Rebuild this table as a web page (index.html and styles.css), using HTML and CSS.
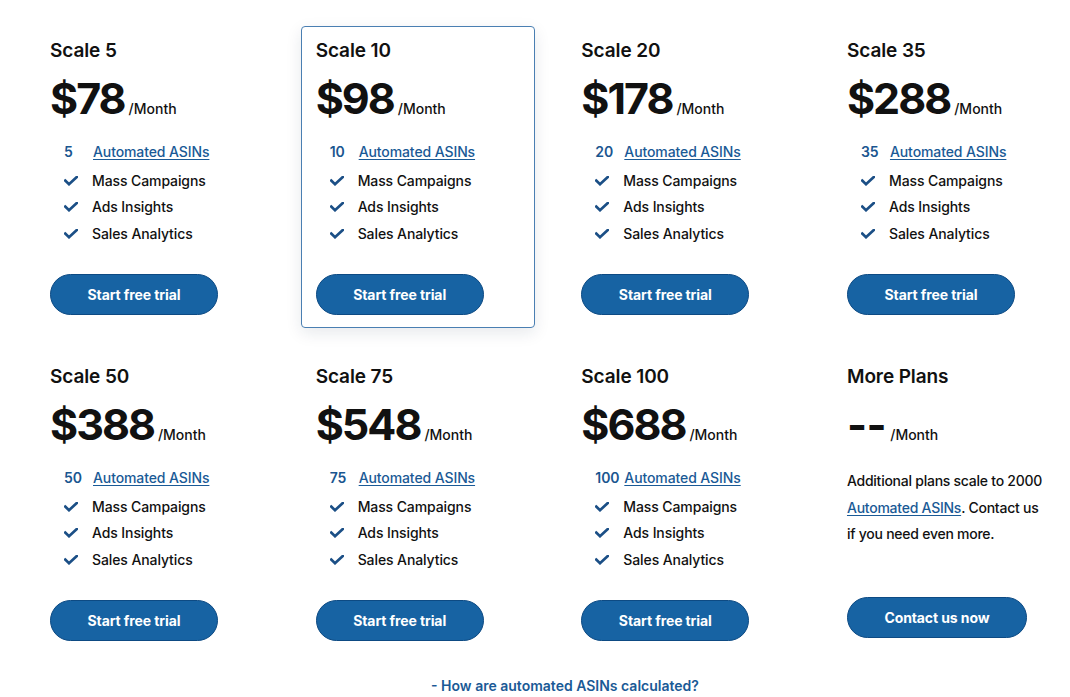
FILE: index.html
```html
<!DOCTYPE html>
<html>
<head>
<meta charset="utf-8">
<link rel="stylesheet" href="styles.css">
</head>
<body>
<main class="pricing">
  <section class="plans">
    <article class="plan">
      <h2 class="plan-name">Scale 5</h2>
      <div class="price"><span class="amount">$78</span><span class="per">/Month</span></div>
      <ul class="features">
        <li class="asins"><span class="num">5</span><a href="#">Automated ASINs</a></li>
        <li><svg class="check" viewBox="0 0 14 10"><path d="M1.2 4.6 5 8.2 12.8 1"/></svg>Mass Campaigns</li>
        <li><svg class="check" viewBox="0 0 14 10"><path d="M1.2 4.6 5 8.2 12.8 1"/></svg>Ads Insights</li>
        <li><svg class="check" viewBox="0 0 14 10"><path d="M1.2 4.6 5 8.2 12.8 1"/></svg>Sales Analytics</li>
      </ul>
      <a class="btn" href="#">Start free trial</a>
    </article>
    <article class="plan featured">
      <h2 class="plan-name">Scale 10</h2>
      <div class="price"><span class="amount">$98</span><span class="per">/Month</span></div>
      <ul class="features">
        <li class="asins"><span class="num">10</span><a href="#">Automated ASINs</a></li>
        <li><svg class="check" viewBox="0 0 14 10"><path d="M1.2 4.6 5 8.2 12.8 1"/></svg>Mass Campaigns</li>
        <li><svg class="check" viewBox="0 0 14 10"><path d="M1.2 4.6 5 8.2 12.8 1"/></svg>Ads Insights</li>
        <li><svg class="check" viewBox="0 0 14 10"><path d="M1.2 4.6 5 8.2 12.8 1"/></svg>Sales Analytics</li>
      </ul>
      <a class="btn" href="#">Start free trial</a>
    </article>
    <article class="plan">
      <h2 class="plan-name">Scale 20</h2>
      <div class="price"><span class="amount">$178</span><span class="per">/Month</span></div>
      <ul class="features">
        <li class="asins"><span class="num">20</span><a href="#">Automated ASINs</a></li>
        <li><svg class="check" viewBox="0 0 14 10"><path d="M1.2 4.6 5 8.2 12.8 1"/></svg>Mass Campaigns</li>
        <li><svg class="check" viewBox="0 0 14 10"><path d="M1.2 4.6 5 8.2 12.8 1"/></svg>Ads Insights</li>
        <li><svg class="check" viewBox="0 0 14 10"><path d="M1.2 4.6 5 8.2 12.8 1"/></svg>Sales Analytics</li>
      </ul>
      <a class="btn" href="#">Start free trial</a>
    </article>
    <article class="plan">
      <h2 class="plan-name">Scale 35</h2>
      <div class="price"><span class="amount">$288</span><span class="per">/Month</span></div>
      <ul class="features">
        <li class="asins"><span class="num">35</span><a href="#">Automated ASINs</a></li>
        <li><svg class="check" viewBox="0 0 14 10"><path d="M1.2 4.6 5 8.2 12.8 1"/></svg>Mass Campaigns</li>
        <li><svg class="check" viewBox="0 0 14 10"><path d="M1.2 4.6 5 8.2 12.8 1"/></svg>Ads Insights</li>
        <li><svg class="check" viewBox="0 0 14 10"><path d="M1.2 4.6 5 8.2 12.8 1"/></svg>Sales Analytics</li>
      </ul>
      <a class="btn" href="#">Start free trial</a>
    </article>
    <article class="plan">
      <h2 class="plan-name">Scale 50</h2>
      <div class="price"><span class="amount">$388</span><span class="per">/Month</span></div>
      <ul class="features">
        <li class="asins"><span class="num">50</span><a href="#">Automated ASINs</a></li>
        <li><svg class="check" viewBox="0 0 14 10"><path d="M1.2 4.6 5 8.2 12.8 1"/></svg>Mass Campaigns</li>
        <li><svg class="check" viewBox="0 0 14 10"><path d="M1.2 4.6 5 8.2 12.8 1"/></svg>Ads Insights</li>
        <li><svg class="check" viewBox="0 0 14 10"><path d="M1.2 4.6 5 8.2 12.8 1"/></svg>Sales Analytics</li>
      </ul>
      <a class="btn" href="#">Start free trial</a>
    </article>
    <article class="plan">
      <h2 class="plan-name">Scale 75</h2>
      <div class="price"><span class="amount">$548</span><span class="per">/Month</span></div>
      <ul class="features">
        <li class="asins"><span class="num">75</span><a href="#">Automated ASINs</a></li>
        <li><svg class="check" viewBox="0 0 14 10"><path d="M1.2 4.6 5 8.2 12.8 1"/></svg>Mass Campaigns</li>
        <li><svg class="check" viewBox="0 0 14 10"><path d="M1.2 4.6 5 8.2 12.8 1"/></svg>Ads Insights</li>
        <li><svg class="check" viewBox="0 0 14 10"><path d="M1.2 4.6 5 8.2 12.8 1"/></svg>Sales Analytics</li>
      </ul>
      <a class="btn" href="#">Start free trial</a>
    </article>
    <article class="plan">
      <h2 class="plan-name">Scale 100</h2>
      <div class="price"><span class="amount">$688</span><span class="per">/Month</span></div>
      <ul class="features">
        <li class="asins"><span class="num">100</span><a href="#">Automated ASINs</a></li>
        <li><svg class="check" viewBox="0 0 14 10"><path d="M1.2 4.6 5 8.2 12.8 1"/></svg>Mass Campaigns</li>
        <li><svg class="check" viewBox="0 0 14 10"><path d="M1.2 4.6 5 8.2 12.8 1"/></svg>Ads Insights</li>
        <li><svg class="check" viewBox="0 0 14 10"><path d="M1.2 4.6 5 8.2 12.8 1"/></svg>Sales Analytics</li>
      </ul>
      <a class="btn" href="#">Start free trial</a>
    </article>
    <article class="plan">
      <h2 class="plan-name">More Plans</h2>
      <div class="price"><span class="amount dash">--</span><span class="per">/Month</span></div>
      <p class="more-text">Additional plans scale to 2000 <a href="#">Automated ASINs</a>. Contact us if you need even more.</p>
      <a class="btn btn-wide" href="#">Contact us now</a>
    </article>
  </section>
  <p class="footnote"><a href="#">- How are automated ASINs calculated?</a></p>
</main>
</body>
</html>
```

FILE: styles.css
```css
* { box-sizing: border-box; }

html, body {
  margin: 0;
  padding: 0;
  background: #ffffff;
}

body {
  font-family: "Inter", "Noto Sans", sans-serif;
  color: #111111;
  font-weight: 500;
}

.pricing {
  padding: 26px 5px 0 35px;
}

.plans {
  display: grid;
  grid-template-columns: repeat(4, 234px);
  column-gap: 31.67px;
  row-gap: 24px;
}

.plan {
  height: 302px;
  padding: 12px 14px 12px 14px;
  border: 1px solid transparent;
  border-radius: 4px;
  display: flex;
  flex-direction: column;
}

.plan.featured {
  border-color: #4a7fb2;
  box-shadow: 0 5px 16px rgba(20, 40, 70, 0.10);
}

.plan-name {
  margin: 0;
  font-size: 19px;
  line-height: 24px;
  font-weight: 600;
  letter-spacing: -0.1px;
}

.price {
  margin-top: 10px;
  height: 52px;
  display: flex;
  align-items: baseline;
  white-space: nowrap;
}

.amount {
  font-size: 43px;
  line-height: 50px;
  font-weight: 700;
  letter-spacing: -2px;
}

.amount.dash {
  letter-spacing: -0.5px;
}

.per {
  margin-left: 4px;
  font-size: 14px;
  font-weight: 500;
}

.features {
  list-style: none;
  margin: 14px 0 0;
  padding: 0 0 0 14px;
  font-size: 14px;
  line-height: 26.5px;
}

.features li {
  display: flex;
  align-items: center;
  height: 26.5px;
  letter-spacing: -0.1px;
}

.features li.asins {
  margin-bottom: 2px;
}

.num {
  min-width: 27px;
  margin-right: 2px;
  color: #1a5690;
  font-weight: 600;
}

.features a, .more-text a {
  color: #1a5a96;
  text-decoration: underline;
  text-underline-offset: 2px;
}

.check {
  width: 14px;
  height: 10px;
  margin-right: 14px;
  flex: none;
  fill: none;
  stroke: #1b4f86;
  stroke-width: 2.7;
  stroke-linecap: square;
  stroke-linejoin: miter;
}

.btn {
  margin-top: auto;
  width: 168px;
  height: 41px;
  display: flex;
  align-items: center;
  justify-content: center;
  border-radius: 21px;
  background: #1763a3;
  border: 1px solid #0d4a83;
  color: #ffffff;
  font-size: 14px;
  font-weight: 700;
  text-decoration: none;
  letter-spacing: -0.1px;
}

.btn-wide {
  width: 180px;
  margin-bottom: 3px;
}

.more-text {
  margin: 17px 4px 0 0;
  font-size: 14px;
  line-height: 26.5px;
  letter-spacing: -0.25px;
}

.footnote {
  margin: 20px 0 0;
  text-align: center;
  font-size: 14px;
  line-height: 24px;
  padding-left: 30px;
}

.footnote a {
  color: #1a5a96;
  font-weight: 600;
  text-decoration: none;
}
```
